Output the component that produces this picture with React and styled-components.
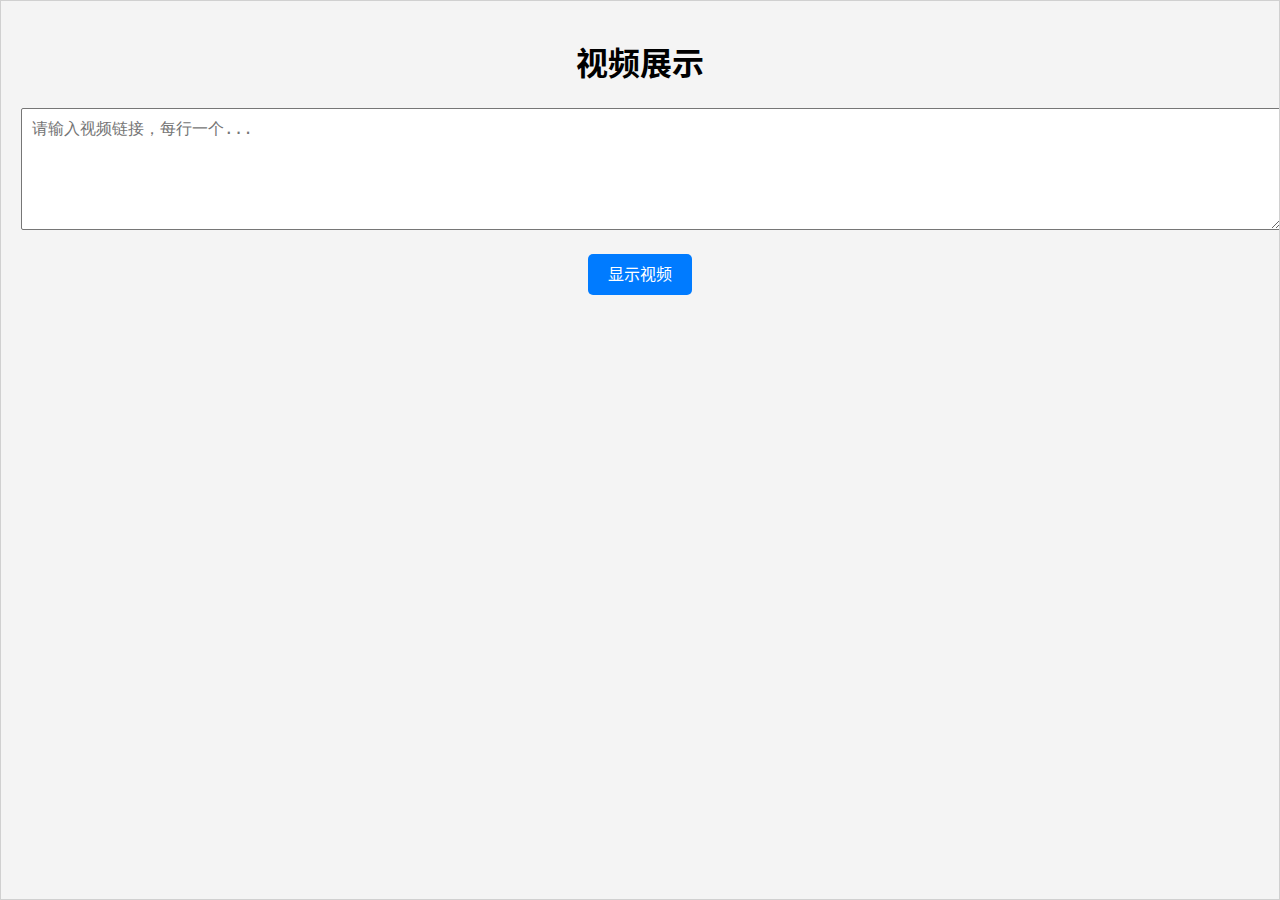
import React from "react";
import styled, { createGlobalStyle } from "styled-components";

const GlobalStyle = createGlobalStyle`
  html, body { margin: 0; padding: 0; }
  body {
    background: #f4f4f4;
    font-family: "Liberation Sans", Arial, "Noto Sans CJK SC", sans-serif;
  }
`;

const Page = styled.div`
  box-sizing: border-box;
  min-height: 900px;
  padding: 20px;
  border: 1px solid #d0d0d0;
  background: #f4f4f4;
  overflow: hidden;
  text-align: center;
`;

const Title = styled.h1`
  margin: 21px 0 22px;
  font-size: 32px;
  line-height: 44px;
  font-weight: bold;
  color: #000;
  font-family: "Liberation Sans", Arial, "Noto Sans CJK SC", sans-serif;
`;

const LinkInput = styled.textarea`
  display: block;
  width: 100%;
  height: 100px;
  padding: 10px;
  margin: 0;
  border: 1px solid #767676;
  border-radius: 2px;
  background: #fff;
  font-size: 16px;
  line-height: 20px;
  font-family: "DejaVu Sans Mono", monospace;
  text-align: left;
  &::placeholder { color: #757575; }
`;

const ShowButton = styled.button`
  display: inline-block;
  margin-top: 24px;
  padding: 10px 20px;
  border: none;
  border-radius: 5px;
  background: #007bff;
  color: #fff;
  font-size: 16px;
  line-height: 21px;
  font-family: "Liberation Sans", Arial, "Noto Sans CJK SC", sans-serif;
  cursor: pointer;
`;

export default function App() {
  return (
    <>
      <GlobalStyle />
      <Page>
        <Title>视频展示</Title>
        <LinkInput placeholder="请输入视频链接，每行一个..." />
        <ShowButton>显示视频</ShowButton>
      </Page>
    </>
  );
}
